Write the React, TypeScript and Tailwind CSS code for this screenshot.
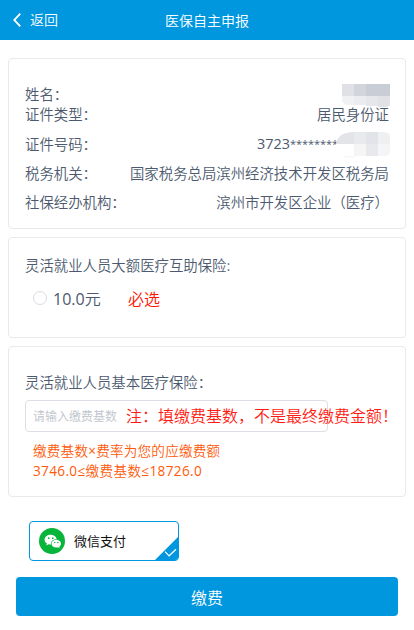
import React from "react";

function Latin({ children }: { children: string }) {
  return <span className="font-['Open_Sans',sans-serif] leading-none font-normal">{children}</span>;
}

function Row({ label, children, className }: { label: string; children: React.ReactNode; className: string }) {
  return (
    <div className={`flex items-center justify-between ${className}`}>
      <span>{label}</span>
      {children}
    </div>
  );
}

function NameMask() {
  return (
    <svg width="48" height="23" viewBox="0 0 48 23" className="mt-0.5 -mr-px shrink-0" shapeRendering="crispEdges">
      <path fill="#dfe1e6" d="M0 0h12v12H0z" />
      <path fill="#d2d5db" d="M12 0h12v12H12z" />
      <path fill="#c9cdd5" d="M24 0h24v12H24z" />
      <path fill="#f0f1f3" d="M0 12h12v9H5L0 18z" />
      <path fill="#ebecef" d="M12 12h12v9H12z" />
      <path fill="#e5e7ea" d="M24 12h12v10H24z" />
      <path fill="#e0e2e6" d="M36 12h12v10l-4 1h-8z" />
    </svg>
  );
}

function NumberMask() {
  return (
    <svg width="54" height="26" viewBox="0 0 54 26" className="mt-0.5 -mr-px -ml-0.5 shrink-0">
      <path fill="#e3e4e8" d="M0 12C1 5 6 0 18 0v12z" />
      <path fill="#fff" d="M0 12h18v12H0z" />
      <path fill="#e9eaed" d="M18 0h12v12H18z" />
      <path fill="#e3e4e9" d="M30 0h12v12H30z" />
      <path fill="#eff0f2" d="M42 0h6q6 1 6 4v8H42z" />
      <path fill="#f5f5f6" d="M18 12h12v12H18z" />
      <path fill="#e8e9ed" d="M30 12h12v12H30z" />
      <path fill="#f5f5f7" d="M42 12h12v10l-4 2h-8z" />
      <path fill="#f7f7f8" d="M6 24h12v1.5H9z" />
    </svg>
  );
}

function WeChatIcon() {
  return (
    <svg width="26" height="26" viewBox="0 0 26 26" className="shrink-0">
      <circle cx="13" cy="13" r="13" fill="#07b53b" />
      <path fill="#fff" d="M11.7 6.8c-3.4 0-6.1 2.1-6.1 4.9 0 1.6.9 2.9 2.3 3.8l-.6 1.9 2.2-1.1c.8.2 1.5.3 2.4.3-.2-3.7 2.6-5.4 5.8-5.4-.5-2.6-3-4.4-6-4.4z" />
      <path fill="#fff" d="M17.3 11.8c-2.8 0-4.8 1.7-4.8 3.9s2.1 3.9 4.8 3.9c.6 0 1.2-.1 1.7-.3l1.7.9-.5-1.5c1.1-.8 1.8-1.8 1.8-3 0-2.2-2.1-3.9-4.7-3.9z" />
      <g fill="#07b53b">
        <circle cx="9.7" cy="10.2" r=".85" />
        <circle cx="13.8" cy="10.2" r=".85" />
        <circle cx="15.7" cy="14.5" r=".7" />
        <circle cx="18.9" cy="14.5" r=".7" />
      </g>
    </svg>
  );
}

export default function App() {
  return (
    <div lang="zh-CN" className="h-[630px] w-[414px] overflow-hidden bg-white font-['Noto_Sans_CJK_SC',sans-serif] text-[14.4px] leading-[20px] font-[350] whitespace-nowrap text-[#4c596e]">
      <header className="grid h-10 grid-cols-3 items-center bg-[#0097df] text-[14px] text-white">
        <button className="-mt-0.5 flex items-center gap-[9px] pl-[13px]">
          <svg width="8" height="14" viewBox="0 0 8 14" fill="none" stroke="currentColor" strokeWidth="1.8" className="mt-0.5">
            <path d="M7.3 .7L1.2 7l6.1 6.3" />
          </svg>
          返回
        </button>
        <h1 className="text-center">医保自主申报</h1>
      </header>

      <main className="flex flex-col gap-2 px-2 pt-[18px]">
        <section className="h-[171px] rounded border border-[#e8e9eb] px-4 pt-6">
          <Row label="姓名：" className="h-[22px]"><NameMask /></Row>
          <Row label="证件类型：" className="-mt-px h-5"><span>居民身份证</span></Row>
          <Row label="证件号码：" className="mt-[5px] h-[29px]">
            <span className="flex items-center font-['Open_Sans',sans-serif] font-normal">
              <span>3723</span>
              <span className="text-[11px] tracking-[-0.05px]">********</span>
              <NumberMask />
            </span>
          </Row>
          <Row label="税务机关：" className="h-[29px]"><span>国家税务总局滨州经济技术开发区税务局</span></Row>
          <Row label="社保经办机构：" className="h-[29px]"><span>滨州市开发区企业（医疗）</span></Row>
        </section>

        <section className="h-[101px] rounded border border-[#e8e9eb] px-4 pt-[17px]">
          <h2>灵活就业人员大额医疗互助保险:</h2>
          <div className="mt-[13px] flex h-5 items-center pl-2 text-[16px]">
            <span className="size-3.5 rounded-full border border-[#d9dce2]" />
            <span className="ml-[6px] w-[75px]"><Latin>10.0</Latin>元</span>
            <span className="text-[#ff1400]">必选</span>
          </div>
        </section>

        <section className="h-[151px] rounded border border-[#e8e9eb] px-4 pt-[25px]">
          <h2>灵活就业人员基本医疗保险：</h2>
          <div className="mt-2 flex h-8 w-[303px] items-center rounded border border-[#dcdfe6] pl-[7px]">
            <span className="w-[93px] shrink-0 text-[12px] text-[#c0c4cc]">请输入缴费基数</span>
            <span className="-mt-0.5 text-[16px] text-[#ff1c14]">注：填缴费基数，不是最终缴费金额！</span>
          </div>
          <div className="mt-2 pl-2 text-[13.6px] text-[#ff5a0a]">
            <p className="h-5 tracking-[0.2px]">缴费基数<Latin>×</Latin>费率为您的应缴费额</p>
            <p className="h-5 tracking-[0.34px]"><Latin>3746.0≤</Latin>缴费基数<Latin>≤18726.0</Latin></p>
          </div>
        </section>
      </main>

      <div className="mt-6 ml-[29px] flex h-10 w-[150px] items-center justify-between overflow-hidden rounded border border-[#0097df] pl-[9px] text-[13px] font-normal text-[#111]">
        <span className="flex items-center gap-[9px]"><WeChatIcon />微信支付</span>
        <svg width="24" height="24" viewBox="0 0 24 24" className="shrink-0 self-end">
          <path fill="#0097df" d="M24 1v23H1z" />
          <path d="M11 15.7l4.1 4.1 6.9-6.6" fill="none" stroke="#fff" strokeWidth="1.2" />
        </svg>
      </div>
      <button className="mt-4 ml-4 h-[39px] w-[382px] rounded bg-[#0097df] text-[16px] text-white">缴费</button>
    </div>
  );
}
